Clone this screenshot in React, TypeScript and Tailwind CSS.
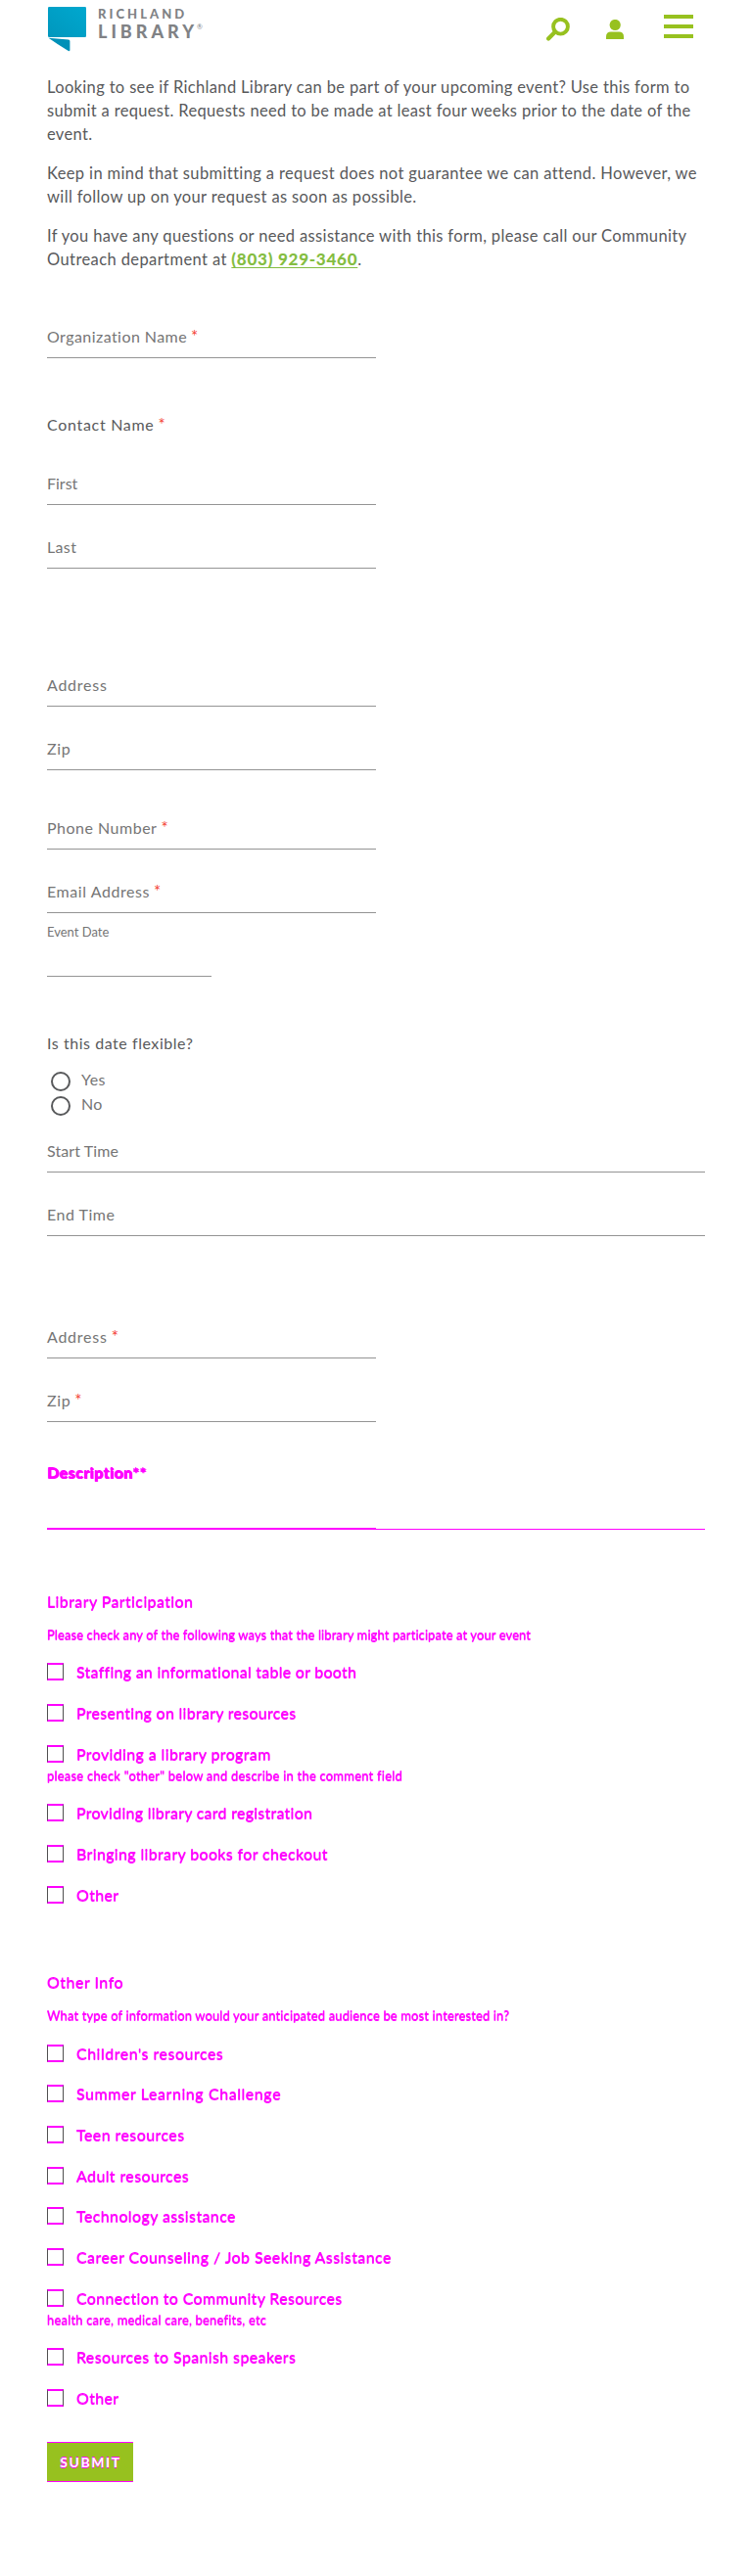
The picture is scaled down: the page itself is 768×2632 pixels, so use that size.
import type { ReactNode } from "react";

function Star() {
  return <span className="ml-1 text-[17px] leading-4 text-[#f44336] tracking-normal">*</span>;
}

function Field({ label, required, width = "w-[336px]", className = "" }: { label: ReactNode; required?: boolean; width?: string; className?: string }) {
  return (
    <label className={`flex h-[65px] flex-col justify-end border-b border-[#949494] pb-[9px] text-[#757575] leading-6 whitespace-nowrap ${width} ${className}`}>
      <span>{label}{required && <Star />}</span>
    </label>
  );
}

function Check({ label, tracking, height, note, noteTracking = "" }: { label: string; tracking: string; height: string; note?: string; noteTracking?: string }) {
  return (
    <div className={`${height} text-[#ff00ff]`}>
      <label className="flex items-start">
        <span className="h-[18px] w-[17px] shrink-0 border-x border-y-2 border-x-[#505050] border-y-[#ff00ff]" />
        <span className={`-mt-[2px] ml-[13px] h-6 leading-6 whitespace-nowrap [text-shadow:0_-1px_0_#ff00ff] ${tracking}`}>{label}</span>
      </label>
      {note && <p className={`text-[13px] leading-5 whitespace-nowrap [text-shadow:0_-1px_0_#ff00ff] ${noteTracking}`}>{note}</p>}
    </div>
  );
}

export default function App() {
  return (
    <div className="h-[2632px] w-[768px] overflow-hidden bg-white pl-12 font-[Lato,sans-serif] text-[16px] text-[#58595b]">
      <header className="flex h-[77px] w-[672px] items-start">
        <svg className="mt-[7px] ml-[1px] h-[46px] w-[39px] shrink-0" viewBox="0 0 39 46">
          <defs>
            <linearGradient id="logo" x1="0" y1="1" x2="1" y2="0">
              <stop offset="0" stopColor="#0097bd" />
              <stop offset="1" stopColor="#00a8cf" />
            </linearGradient>
          </defs>
          <rect width="39" height="31" rx="1.2" fill="url(#logo)" />
          <path d="M.5 31.8 21 33.5q1.4.1 1.4 1.4v9q0 2-2 .9Q10 38.500.5 31.800z" fill="#0091b8" />
        </svg>
        <div className="ml-3 w-[130px] text-[#808285]">
          <div className="mt-[6px] h-[16px] text-[13px] leading-4 font-black tracking-[3.05px]">RICHLAND</div>
          <div className="flex h-[20px] items-start text-[18px] leading-5 font-black tracking-[4px]">
            LIBRARY<span className="-ml-[1px] text-[7px] leading-[10px] font-normal tracking-normal">®</span>
          </div>
        </div>
        <svg className="mt-[18px] ml-[328px] h-6 w-6 shrink-0" viewBox="0 0 24 24" fill="none" stroke="#97c11f">
          <circle cx="14.500" cy="9.200" r="7.400" strokeWidth="3.900" />
          <path d="m9 14.500-6.900 6.900" strokeWidth="4.200" strokeLinecap="round" />
        </svg>
        <svg className="mt-5 ml-[37px] h-5 w-[18px] shrink-0" viewBox="0 0 18 20" fill="#97c11f">
          <circle cx="9.200" cy="5.500" r="5.600" />
          <path d="M0 20v-2.500q0-4.900 5-4.900h8q5 0 5 4.900V20z" />
        </svg>
        <div className="mt-[15px] ml-[41px] flex w-[30px] flex-col gap-[6px]">
          <span className="h-1 bg-[#97c11f]" />
          <span className="h-1 bg-[#97c11f]" />
          <span className="h-1 bg-[#97c11f]" />
        </div>
      </header>

      <div className="flex flex-col gap-4 text-[16.5px] leading-6 whitespace-nowrap">
        <p>
          <span className="tracking-[0.34px]">Looking to see if Richland Library can be part of your upcoming event? Use this form to</span><br />
          <span className="tracking-[0.33px]">submit a request. Requests need to be made at least four weeks prior to the date of the</span><br />
          <span className="tracking-[0.33px]">event.</span>
        </p>
        <p>
          <span className="tracking-[0.37px]">Keep in mind that submitting a request does not guarantee we can attend. However, we</span><br />
          <span className="tracking-[0.36px]">will follow up on your request as soon as possible.</span>
        </p>
        <p>
          <span className="tracking-[0.35px]">If you have any questions or need assistance with this form, please call our Community</span><br />
          <span className="tracking-[0.4px]">Outreach department at </span>
          <a className="text-[17px] leading-4 font-black tracking-[0.75px] text-[#84bd41] underline decoration-1 underline-offset-[2px] [text-decoration-skip-ink:none]">(803) 929-3460</a>.
        </p>
      </div>

      <form className="flex flex-col">
        <Field className="mt-[24px] tracking-[0.44px]" label="Organization Name" required />

        <h2 className="mt-[56px] h-6 leading-6 tracking-[0.7px]">Contact Name<Star /></h2>
        <Field className="mt-[5px] tracking-[0px]" label="First" />
        <Field className="tracking-[0.35px]" label="Last" />

        <Field className="mt-[76px] tracking-[0.75px]" label="Address" />
        <Field className="tracking-[0.6px]" label="Zip" />

        <Field className="mt-4 tracking-[0.5px]" label="Phone Number" required />
        <Field className="tracking-[0.56px]" label="Email Address" required />
        <label className="flex h-[65px] w-[168px] flex-col border-b border-[#949494] pt-[9px] text-[13px] leading-5 text-[#757575]">Event Date</label>

        <h2 className="mt-[56px] h-6 leading-6 tracking-[0.55px]">Is this date flexible?</h2>
        <div className="mt-[13px] flex h-[50px] flex-col text-[#757575]">
          <label className="flex h-[25px] items-start leading-6 tracking-[0.4px]">
            <span className="mt-1 mr-[11px] ml-1 h-5 w-5 rounded-full border-2 border-[#58595b]" />Yes
          </label>
          <label className="flex h-[25px] items-start leading-6 tracking-[0.4px]">
            <span className="mt-1 mr-[11px] ml-1 h-5 w-5 rounded-full border-2 border-[#58595b]" />No
          </label>
        </div>

        <Field className="-mt-[8px] tracking-[0.1px]" width="w-[672px]" label="Start Time" />
        <Field className="tracking-[0.5px]" width="w-[672px]" label="End Time" />

        <Field className="mt-[60px] tracking-[0.75px]" label="Address" required />
        <Field className="tracking-[0.6px]" label="Zip" required />

        <div className="mt-10 flex h-[70px] w-[672px] flex-col text-[#ff00ff]">
          <div className="h-[68px] leading-6 font-bold tracking-[0.45px] whitespace-nowrap [text-shadow:1px_0_0_#ff00ff,0_-1px_0_#ff00ff]">Description**</div>
          <div className="h-px w-[336px] bg-[#ff00ff]" />
          <div className="h-px w-[672px] bg-[#ff00ff]" />
        </div>

        <h2 className="mt-[62px] h-6 leading-6 tracking-[0.4px] text-[#ff00ff] [text-shadow:0_-1px_0_#ff00ff]">Library Participation</h2>
        <p className="mt-3 h-5 text-[13px] leading-5 tracking-[0.09px] whitespace-nowrap text-[#ff00ff] [text-shadow:0_-1px_0_#ff00ff]">Please check any of the following ways that the library might participate at your event</p>
        <div className="mt-[18px] flex flex-col">
          <Check height="h-[42px]" tracking="tracking-[0.26px]" label="Staffing an informational table or booth" />
          <Check height="h-[42px]" tracking="tracking-[0.28px]" label="Presenting on library resources" />
          <Check height="h-[60px]" tracking="tracking-[0.37px]" label="Providing a library program" note={'please check "other" below and describe in the comment field'} noteTracking="tracking-[0.21px]" />
          <Check height="h-[42px]" tracking="tracking-[0.26px]" label="Providing library card registration" />
          <Check height="h-[42px]" tracking="tracking-[0.35px]" label="Bringing library books for checkout" />
          <Check height="h-[42px]" tracking="tracking-[0.35px]" label="Other" />
        </div>

        <h2 className="mt-[45px] h-6 leading-6 tracking-[0.5px] text-[#ff00ff] [text-shadow:0_-1px_0_#ff00ff]">Other Info</h2>
        <p className="mt-3 h-5 text-[13px] leading-5 tracking-[0.13px] whitespace-nowrap text-[#ff00ff] [text-shadow:0_-1px_0_#ff00ff]">What type of information would your anticipated audience be most interested in?</p>
        <div className="mt-[19px] flex flex-col">
          <Check height="h-[41px]" tracking="tracking-[0.5px]" label="Children's resources" />
          <Check height="h-[42px]" tracking="tracking-[0.57px]" label="Summer Learning Challenge" />
          <Check height="h-[42px]" tracking="tracking-[0.42px]" label="Teen resources" />
          <Check height="h-[41px]" tracking="tracking-[0.38px]" label="Adult resources" />
          <Check height="h-[42px]" tracking="tracking-[0.39px]" label="Technology assistance" />
          <Check height="h-[42px]" tracking="tracking-[0.42px]" label="Career Counseling / Job Seeking Assistance" />
          <Check height="h-[60px]" tracking="tracking-[0.33px]" label="Connection to Community Resources" note="health care, medical care, benefits, etc" noteTracking="tracking-[0.19px]" />
          <Check height="h-[42px]" tracking="tracking-[0.37px]" label="Resources to Spanish speakers" />
          <Check height="h-[42px]" tracking="tracking-[0.35px]" label="Other" />
        </div>

        <button type="button" className="mt-3 h-[41px] w-[88px] border-y border-[#ff00ff] bg-[#97c11f] pl-[1px] text-[14px] leading-[39px] font-bold tracking-[1.6px] text-white [text-shadow:0_-1px_0_#ff00ff,0_1px_0_#ff00ff]">SUBMIT</button>
      </form>
    </div>
  );
}
